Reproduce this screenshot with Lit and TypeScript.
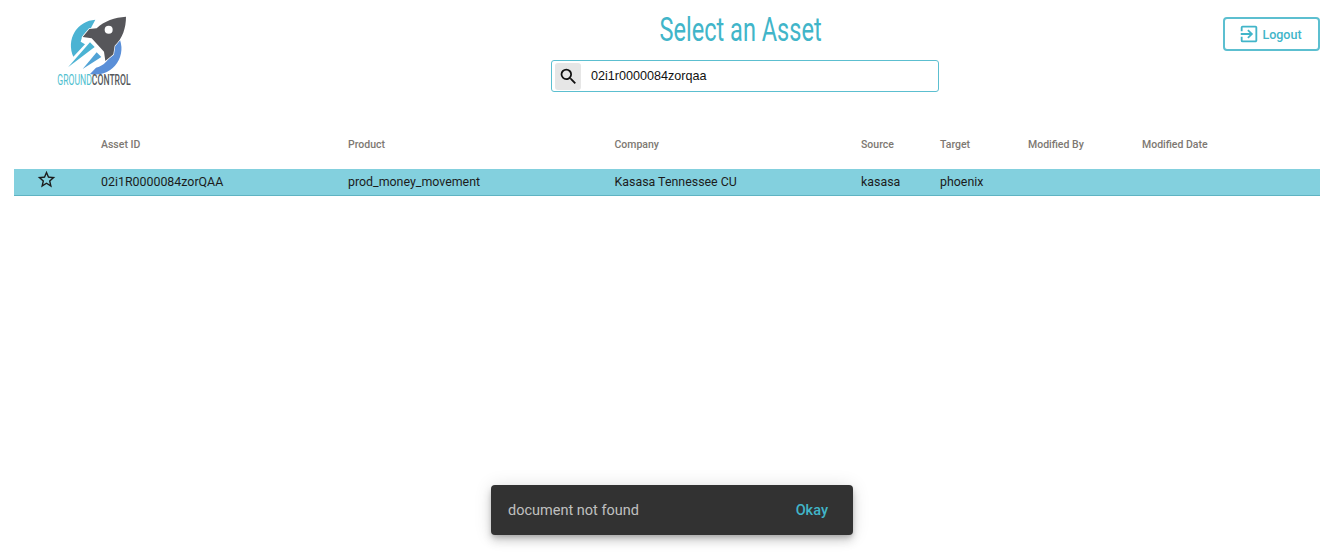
import { LitElement, html, css } from "lit";
import { customElement } from "lit/decorators.js";

const COLS = ["Asset ID", "Product", "Company", "Source", "Target", "Modified By", "Modified Date"];
const ROW = ["02i1R0000084zorQAA", "prod_money_movement", "Kasasa Tennessee CU", "kasasa", "phoenix", "", ""];

@customElement("app-root")
export class AppRoot extends LitElement {
  static styles = css`
    :host { display: block; position: relative; height: 560px; overflow: hidden; background: #fff; font-family: Roboto, "Liberation Sans", sans-serif; }
    .header { display: grid; grid-template-columns: 511px 388px 1fr; height: 106px; padding: 0 24px 0 40px; box-sizing: border-box; }
    .logo { position: relative; width: 110px; height: 95px; margin-top: 5px; }
    .logo svg { display: block; }
    .logo-text { position: absolute; left: -6px; top: 67px; width: 120px; text-align: center; font-size: 14px; line-height: 16px; font-weight: 500; white-space: nowrap; transform: scaleX(0.615); }
    .logo-text .g { color: #4fc0cf; font-weight: 400; }
    .logo-text .c { color: #55585c; }
    .center { display: flex; flex-direction: column; align-items: center; padding-top: 8px; }
    h1 { margin: 0 8px 0 0; height: 52px; font-size: 33px; line-height: 44px; font-weight: 400; color: #41b5c9; white-space: nowrap; transform: scaleX(0.714); }
    .search { width: 388px; height: 32px; box-sizing: border-box; border: 1px solid #5cbfd0; border-radius: 3px; display: flex; align-items: center; padding: 0 3px; gap: 10px; }
    .search-icon { width: 26px; height: 27px; background: #e6e6e6; border-radius: 3px; display: flex; align-items: center; justify-content: center; }
    .search-text { font-family: "Liberation Sans", Arial, sans-serif; font-size: 12.6px; color: #111; }
    .right { display: flex; justify-content: flex-end; align-items: flex-start; padding-top: 17px; }
    .logout { width: 97px; height: 34px; box-sizing: border-box; border: 2px solid #5cbfd0; border-radius: 4px; color: #41b5c9; font-size: 12.5px; font-weight: 500; display: flex; align-items: center; justify-content: center; gap: 2px; padding-right: 3px; background: #fff; }
    .table { margin: 0 24px 0 14px; }
    .row { display: grid; grid-template-columns: 87px 247px 266.5px 246.5px 79px 88px 114px 1fr; align-items: center; }
    .head { height: 63px; font-size: 10.5px; font-weight: 500; color: #7d7872; box-sizing: border-box; padding-top: 13px; }
    .data { height: 27px; background: #83d0de; border-bottom: 1px solid #5fb3c2; box-sizing: border-box; font-size: 12.4px; line-height: 24px; color: #1c1c1c; padding-bottom: 1px; }
    .star { display: flex; justify-content: center; width: 64px; margin-top: -4px; }
    .snack { position: absolute; left: 491px; top: 485px; width: 362px; height: 50px; box-sizing: border-box; background: #323232; border-radius: 4px; box-shadow: 0 3px 5px -1px rgba(0,0,0,.2), 0 6px 10px 0 rgba(0,0,0,.14), 0 1px 18px 0 rgba(0,0,0,.12); display: flex; align-items: center; justify-content: space-between; padding: 0 25px 0 17px; font-size: 14.5px; color: rgba(255,255,255,.7); }
    .okay { color: #41b5c9; font-weight: 500; }
  `;

  render() {
    return html`
      <div class="header">
        <div class="logo">
          <svg width="110" height="95" viewBox="0 0 330 285">
            <path d="M166 44 A78 78 0 0 0 100 155 L135 118 L122 110 A50 50 0 0 1 150 74 Z" fill="#4bb3d3"></path>
            <path d="M240 105 A78 78 0 0 1 150 207 L168 188 A60 60 0 0 0 214 134 Z" fill="#5a8fd8"></path>
            <path d="M84 187 L150 112 L164 126 Z" fill="#4bb3d3"></path>
            <path d="M128 192 L170 142 L184 156 Z" fill="#52a3d6"></path>
            <path d="M258 35 C225 37 192 48 170 70 L148 72 L128 96 L155 100 L192 140 L196 168 L220 148 L224 122 C248 100 258 68 258 35 Z" fill="#56565a" stroke="#fff" stroke-width="4" paint-order="stroke"></path>
            <circle cx="206" cy="74" r="12" fill="#fff"></circle>
          </svg>
          <div class="logo-text"><span class="g">GROUND</span><span class="c">CONTROL</span></div>
        </div>
        <div class="center">
          <h1>Select an Asset</h1>
          <div class="search">
            <div class="search-icon">
              <svg width="21" height="21" viewBox="0 0 24 24"><path fill="#111" d="M15.5 14h-.79l-.28-.27A6.47 6.47 0 0 0 16 9.5 6.5 6.5 0 1 0 9.5 16c1.61 0 3.09-.59 4.23-1.57l.27.28v.79l5 4.99L20.49 19l-4.99-5zm-6 0C7.01 14 5 11.99 5 9.5S7.01 5 9.5 5 14 7.01 14 9.5 11.99 14 9.5 14z"></path></svg>
            </div>
            <span class="search-text">02i1r0000084zorqaa</span>
          </div>
        </div>
        <div class="right">
          <div class="logout">
            <svg width="22" height="22" viewBox="0 0 24 24"><path fill="#41b5c9" d="M10.09 15.59 11.5 17l5-5-5-5-1.41 1.41L12.67 11H3v2h9.67l-2.58 2.59zM19 3H5a2 2 0 0 0-2 2v4h2V5h14v14H5v-4H3v4a2 2 0 0 0 2 2h14c1.1 0 2-.9 2-2V5c0-1.1-.9-2-2-2z"></path></svg>
            Logout
          </div>
        </div>
      </div>
      <div class="table">
        <div class="row head"><span></span>${COLS.map((c) => html`<span>${c}</span>`)}</div>
        <div class="row data">
          <span class="star">
            <svg width="21" height="21" viewBox="0 0 24 24"><path fill="#1c1c1c" d="M22 9.24l-7.19-.62L12 2 9.19 8.63 2 9.24l5.46 4.73L5.82 21 12 17.27 18.18 21l-1.63-7.03L22 9.24zM12 15.4l-3.76 2.27 1-4.28-3.32-2.88 4.38-.38L12 6.1l1.71 4.04 4.38.38-3.32 2.88 1 4.28L12 15.4z"></path></svg>
          </span>
          ${ROW.map((c) => html`<span>${c}</span>`)}
        </div>
      </div>
      <div class="snack"><span>document not found</span><span class="okay">Okay</span></div>
    `;
  }
}
